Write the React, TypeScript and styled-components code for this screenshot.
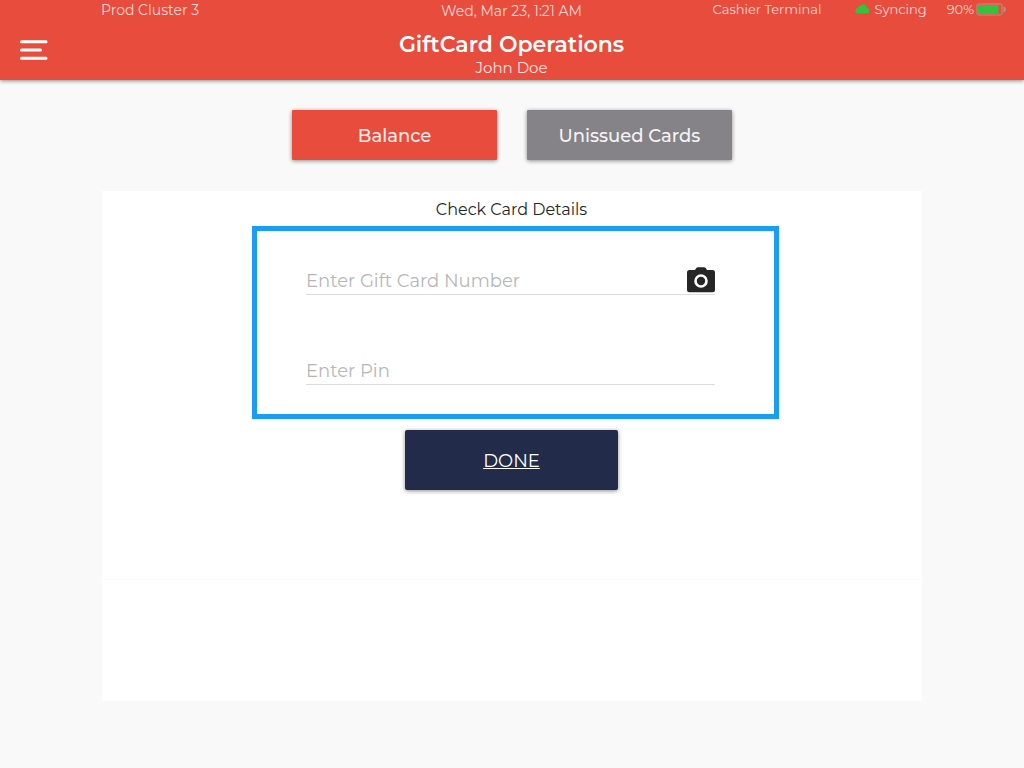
import React from "react";
import styled, { createGlobalStyle } from "styled-components";

const GlobalStyle = createGlobalStyle`
  *, *::before, *::after { box-sizing: border-box; }
  body {
    margin: 0;
    background: #f9f9f9;
    color: #262626;
    font-family: Montserrat, Inter, "Open Sans", sans-serif;
  }
  button, input { font-family: inherit; }
`;

const shadow = "0 1px 4px rgba(0, 0, 0, 0.45)";

const Header = styled.header`
  height: 80px;
  padding-right: 1px;
  background: #e84c3d;
  color: #fff;
  box-shadow: ${shadow};
`;

const StatusBar = styled.div`
  display: grid;
  grid-template-columns: 1fr auto 1fr;
  height: 20px;
  font-size: 14px;
  line-height: 20px;
  color: #fbd9d5;
  white-space: nowrap;
`;

const Cluster = styled.span`
  padding-left: 101px;
`;

const Clock = styled.time`
  padding-top: 1px;
`;

const StatusGroup = styled.div`
  display: flex;
  justify-content: flex-end;
  align-items: center;
  height: 18px;
  padding-right: 16px;
  font-size: 13px;
`;

const Sync = styled.span`
  display: flex;
  align-items: center;
  gap: 4px;
  margin: 0 20px 0 34px;
`;

const Battery = styled.span`
  display: flex;
  align-items: center;
  gap: 2px;
`;

const TitleBar = styled.div`
  display: grid;
  grid-template-columns: 1fr auto 1fr;
  height: 60px;
`;

const MenuButton = styled.button`
  justify-self: start;
  align-self: center;
  display: flex;
  margin-left: 20px;
  padding: 0;
  border: 0;
  background: none;
  color: #fff;
  cursor: pointer;
`;

const TitleBlock = styled.div`
  padding-top: 10px;
  text-align: center;
`;

const Title = styled.h1`
  margin: 0;
  font-size: 22px;
  line-height: 29px;
  font-weight: 600;
`;

const UserName = styled.p`
  margin: 0;
  font-size: 15px;
  line-height: 17px;
  color: #fde4e1;
`;

const Main = styled.main`
  width: 80%;
  margin: 0 auto;
  padding: 30px 0 66px;
`;

const Modes = styled.nav`
  display: flex;
  justify-content: center;
  gap: 30px;
`;

const ModeButton = styled.button<{ $active?: boolean }>`
  width: 25%;
  height: 50px;
  padding: 1px 0 0;
  border: 0;
  border-radius: 1px;
  background: ${(p) => (p.$active ? "#e84c3d" : "#858388")};
  color: ${(p) => (p.$active ? "#fcecea" : "#f4f4f4")};
  font-size: 18px;
  font-weight: 500;
  box-shadow: ${shadow};
  cursor: pointer;
`;

const Panel = styled.form`
  display: flex;
  flex-direction: column;
  align-items: center;
  min-height: 389px;
  margin-top: 31px;
  padding-right: 1px;
  background: #fff;
  border-bottom: 1px solid #fafafa;
`;

const PanelTitle = styled.h2`
  margin: 0;
  padding: 7px 0 4px;
  font-size: 16px;
  line-height: 24px;
  font-weight: 400;
`;

const Fields = styled.div`
  display: flex;
  flex-direction: column;
  gap: 50px;
  width: calc(50% + 118px);
  margin-left: 8px;
  padding: 24px 59px 29px 49px;
  border: 5px solid #1b9df5;
`;

const Field = styled.div`
  display: flex;
  align-items: center;
  height: 40px;
  border-bottom: 1px solid #dcdcdc;
`;

const TextInput = styled.input`
  flex: 1;
  min-width: 0;
  height: 39px;
  padding: 12px 0 0;
  border: 0;
  outline: 0;
  background: none;
  color: #262626;
  font-size: 18px;
  &::placeholder { color: #b7b7b7; opacity: 1; }
`;

const ScanButton = styled.button`
  align-self: flex-end;
  display: flex;
  padding: 0 0 1px;
  border: 0;
  background: none;
  color: #262626;
  cursor: pointer;
`;

const DoneButton = styled.button`
  width: 26%;
  height: 60px;
  margin-top: 11px;
  padding: 1px 0 0;
  border: 0;
  border-radius: 2px;
  background: #232b4a;
  color: #fff;
  font-size: 18px;
  text-decoration: underline;
  text-decoration-thickness: 1px;
  text-underline-offset: 1px;
  box-shadow: ${shadow};
  cursor: pointer;
`;

const Results = styled.section`
  height: 121px;
  background: #fff;
`;

const CloudIcon = () => (
  <svg width="15" height="10" viewBox="0 0 15 10" aria-hidden="true">
    <path
      fill="#34c13b"
      d="M3.2 9.5A2.9 2.9 0 0 1 .3 6.700A2.600 2.600 0 0 1 2.700 4A2.300 2.300 0 0 1 5.300 2.100A3.700 3.700 0 0 1 12.100 3.700A2.950 2.950 0 0 1 11.700 9.500Z"
    />
  </svg>
);

const BatteryIcon = () => (
  <svg width="31" height="13" viewBox="0 0 31 13" aria-hidden="true">
    <rect x="1" y="1" width="25" height="11" rx="2" fill="none" stroke="#c67970" strokeWidth="1.500" />
    <rect x="2" y="2" width="20.500" height="9" fill="#34c13b" />
    <path d="M27.500 3.500C30.500 4.500 30.500 8.500 27.500 9.500Z" fill="#b8938e" />
  </svg>
);

const MenuIcon = () => (
  <svg width="28" height="20" viewBox="0 0 28 20" aria-hidden="true">
    <path d="M1.500 1.700H26M1.500 10H20.500M1.500 18.300H26" stroke="currentColor" strokeWidth="3" strokeLinecap="round" />
  </svg>
);

const CameraIcon = () => (
  <svg width="28" height="26" viewBox="0 0 28 26" aria-hidden="true">
    <path
      fill="currentColor"
      d="M2.500 3H8L9.300 1Q9.900.2 11 .2H17Q18.100.2 18.700 1L20 3H25.500Q28 3 28 5.500V22.700Q28 25.200 25.500 25.200H2.500Q0 25.200 0 22.700V5.500Q0 3 2.500 3Z"
    />
    <circle cx="14" cy="14" r="5.500" fill="none" stroke="#fff" strokeWidth="2.600" />
  </svg>
);

export default function App() {
  return (
    <>
      <GlobalStyle />
      <Header>
        <StatusBar>
          <Cluster>Prod Cluster 3</Cluster>
          <Clock>Wed, Mar 23, 1:21 AM</Clock>
          <StatusGroup>
            <span>Cashier Terminal</span>
            <Sync>
              <CloudIcon />
              Syncing
            </Sync>
            <Battery>
              90%
              <BatteryIcon />
            </Battery>
          </StatusGroup>
        </StatusBar>
        <TitleBar>
          <MenuButton type="button" aria-label="Menu">
            <MenuIcon />
          </MenuButton>
          <TitleBlock>
            <Title>GiftCard Operations</Title>
            <UserName>John Doe</UserName>
          </TitleBlock>
        </TitleBar>
      </Header>
      <Main>
        <Modes>
          <ModeButton type="button" $active>
            Balance
          </ModeButton>
          <ModeButton type="button">Unissued Cards</ModeButton>
        </Modes>
        <Panel onSubmit={(e) => e.preventDefault()}>
          <PanelTitle>Check Card Details</PanelTitle>
          <Fields>
            <Field>
              <TextInput type="text" aria-label="Gift card number" placeholder="Enter Gift Card Number" />
              <ScanButton type="button" aria-label="Scan card">
                <CameraIcon />
              </ScanButton>
            </Field>
            <Field>
              <TextInput type="text" aria-label="Pin" placeholder="Enter Pin" />
            </Field>
          </Fields>
          <DoneButton type="submit">DONE</DoneButton>
        </Panel>
        <Results aria-label="Card details" />
      </Main>
    </>
  );
}
